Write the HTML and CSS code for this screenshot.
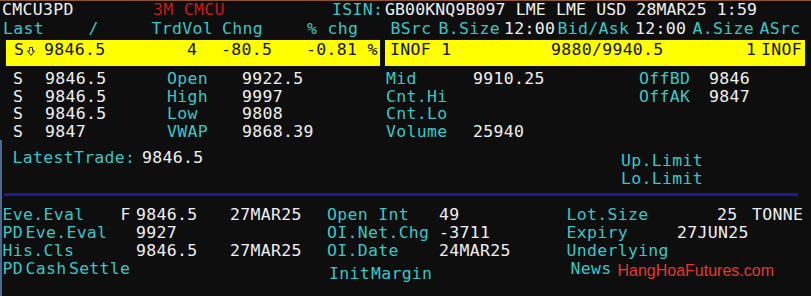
FILE: index.html
```html
<!DOCTYPE html>
<html>
<head>
<meta charset="utf-8">
<title>CMCU3PD</title>
<link rel="stylesheet" href="styles.css">
</head>
<body>
<div class="screen">
  <div class="line l0">
    <span class="w">CMCU3PD</span><span class="r">3M CMCU</span><span class="c">ISIN:</span><span class="w hdr-val">GB00KNQ9B097 LME LME USD 28MAR25 1:59</span>
  </div>
  <div class="line l1">
    <span class="c">Last</span><span class="c">/</span><span class="c">TrdVol</span><span class="c">Chng</span><span class="c">% chg</span><span class="c">BSrc</span><span class="c">B.Size</span><span class="w">12:00</span><span class="c">Bid/Ask</span><span class="w">12:00</span><span class="c">A.Size</span><span class="c">ASrc</span>
  </div>
  <div class="band">
    <div class="box box-l">
      <span>S</span>
      <span class="arrow"><svg width="8" height="9" viewBox="0 0 8 9"><path d="M2.5 0.5 H5.5 V4 H7.5 L4 8.3 L0.5 4 H2.5 Z" fill="none" stroke="#111" stroke-width="1"/></svg></span>
      <span>9846.5</span><span>4</span><span>-80.5</span><span>-0.81 %</span>
    </div>
    <div class="box box-r">
      <span>INOF 1</span><span>9880/9940.5</span><span>1</span><span>INOF</span>
    </div>
  </div>
  <div class="quotes">
    <div class="q"><span class="w">S</span><span class="w">9846.5</span><span class="c">Open</span><span class="w">9922.5</span><span class="c">Mid</span><span class="w">9910.25</span><span class="c">OffBD</span><span class="w">9846</span></div>
    <div class="q"><span class="w">S</span><span class="w">9846.5</span><span class="c">High</span><span class="w">9997</span><span class="c">Cnt.Hi</span><span></span><span class="c">OffAK</span><span class="w">9847</span></div>
    <div class="q"><span class="w">S</span><span class="w">9846.5</span><span class="c">Low</span><span class="w">9808</span><span class="c">Cnt.Lo</span></div>
    <div class="q"><span class="w">S</span><span class="w">9847</span><span class="c">VWAP</span><span class="w">9868.39</span><span class="c">Volume</span><span class="w">25940</span></div>
  </div>
  <div class="lower">
    <div class="mid">
      <div class="latest"><span class="c">LatestTrade:</span><span class="w">9846.5</span></div>
      <div class="limits">
        <div class="c">Up.Limit</div>
        <div class="c">Lo.Limit</div>
      </div>
    </div>
    <div class="rule"></div>
    <div class="b">
      <span class="c">Eve.Eval</span><span class="w">F</span><span class="w">9846.5</span><span class="w">27MAR25</span><span class="c">Open Int</span><span class="w">49</span>
      <span class="sub sub-a"><span class="c">Lot.Size</span><span class="w">25</span><span class="w">TONNE</span></span>
    </div>
    <div class="b">
      <span class="c">PD<span class="sp">Eve.Eval</span></span><span></span><span class="w">9927</span><span></span><span class="c">OI.Net.Chg</span><span class="w">-3711</span>
      <span class="sub sub-b"><span class="c">Expiry</span><span class="w">27JUN25</span></span>
    </div>
    <div class="b">
      <span class="c">His.Cls</span><span></span><span class="w">9846.5</span><span class="w">27MAR25</span><span class="c">OI.Date</span><span class="w">24MAR25</span>
      <span class="c">Underlying</span>
    </div>
    <div class="b b-last">
      <span class="c">PD<span class="sp">Cash</span><span class="sp">Settle</span></span><span></span><span></span><span></span><span class="c init">Init<span class="sp1">Margin</span></span><span></span>
      <span class="news"><span class="c">News</span><span class="link">HangHoaFutures.com</span></span>
    </div>
  </div>
</div>
</body>
</html>
```
FILE: styles.css
```css
html, body {
  margin: 0;
  padding: 0;
  background: #0e0e0e;
}

.screen {
  width: 811px;
  height: 296px;
  box-sizing: border-box;
  border-top: 1px solid #8a5530;
  overflow: hidden;
  background: #0e0e0e;
  color: #f0f0f0;
  font-family: "DejaVu Sans Mono", monospace;
  font-size: 16.5px;
  letter-spacing: 0.3px;
  line-height: 18px;
}

.screen span {
  white-space: pre;
}

.w { color: #f0f0f0; }
.c { color: #3cc6c6; }
.r { color: #c41c1c; }

.line {
  display: grid;
  height: 19px;
}

.l0 {
  grid-template-columns: 151px 179px 53px auto;
  padding-left: 2px;
}

.hdr-val {
  letter-spacing: 0.12px;
}

.l1 {
  grid-template-columns: 85.5px 63px 70.5px 85px 83.5px 48px 65.5px 53.5px 77.5px 57.5px 67px auto;
  padding-left: 3px;
}

.band {
  display: flex;
  gap: 5px;
  padding-left: 6px;
  margin-top: 1px;
  height: 26px;
}

.box {
  background: #ffff00;
  color: #111;
  display: grid;
  box-sizing: border-box;
  padding-top: 1px;
  height: 26px;
}

.box-l {
  width: 374px;
  padding-left: 8px;
  grid-template-columns: 13px 17px 143px 34px 85px auto;
}

.box-r {
  width: 420px;
  padding-left: 5px;
  grid-template-columns: 161px 195px 15px auto;
}

.arrow {
  display: flex;
  align-items: center;
  height: 18px;
  padding-top: 1px;
}

.arrow svg { display: block; }

.quotes {
  margin-top: 4px;
}

.q {
  display: grid;
  grid-template-columns: 32px 122px 75px 144px 87px 166px 70px auto;
  padding-left: 13px;
  height: 17.5px;
}

.lower {
  box-shadow: inset 2px 0 0 #4c6a90;
  height: 160px;
}

.mid {
  display: grid;
  grid-template-columns: 621px auto;
  align-items: start;
}

.latest {
  display: grid;
  grid-template-columns: 129.5px auto;
  margin-top: 9px;
  padding-left: 12.5px;
  height: 18px;
}

.limits {
  margin-top: 12px;
}

.limits div { height: 18px; }

.rule {
  width: 794px;
  height: 3px;
  margin: 5px 0 10px 4px;
  background: #1c1c96;
}

.b {
  display: grid;
  grid-template-columns: 118px 15.5px 94px 97px 112px 127.5px auto;
  padding-left: 2.5px;
  height: 18px;
  align-items: start;
}

.sp { margin-left: 2.5px; }
.sp1 { margin-left: 1px; }

.sub { display: grid; }
.sub-a { grid-template-columns: 150.5px 35px auto; }
.sub-b { grid-template-columns: 110.5px auto; }

.init {
  margin-top: 5px;
  padding-left: 2px;
}

.news {
  padding-left: 4px;
}

.link {
  color: #e03a32;
  font-family: "Liberation Sans", Arial, sans-serif;
  font-size: 16px;
  letter-spacing: 0;
  margin-left: 6px;
  vertical-align: -1.5px;
}
```
